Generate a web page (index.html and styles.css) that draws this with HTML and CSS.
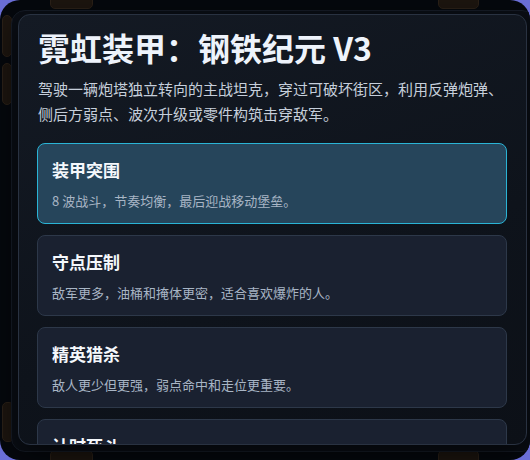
FILE: index.html
```
<!DOCTYPE html>
<html lang="zh-CN">
<head>
<meta charset="utf-8">
<title>霓虹装甲：钢铁纪元 V3</title>
<link rel="stylesheet" href="styles.css">
</head>
<body>
<div class="stage">
  <div class="deco deco-top-a"></div>
  <div class="deco deco-top-b"></div>
  <div class="deco deco-bot-a"></div>
  <div class="deco deco-bot-b"></div>
  <div class="deco deco-left-a"></div>
  <div class="deco deco-left-b"></div>
  <div class="deco deco-left-c"></div>
  <div class="backplate"></div>
  <section class="modal">
    <h1 class="title">霓虹装甲：钢铁纪元 V3</h1>
    <p class="intro">驾驶一辆炮塔独立转向的主战坦克，穿过可破坏街区，利用反弹炮弹、侧后方弱点、波次升级或零件构筑击穿敌军。</p>
    <div class="modes">
      <div class="mode is-active">
        <div class="mode-name">装甲突围</div>
        <div class="mode-desc">8 波战斗，节奏均衡，最后迎战移动堡垒。</div>
      </div>
      <div class="mode">
        <div class="mode-name">守点压制</div>
        <div class="mode-desc">敌军更多，油桶和掩体更密，适合喜欢爆炸的人。</div>
      </div>
      <div class="mode">
        <div class="mode-name">精英猎杀</div>
        <div class="mode-desc">敌人更少但更强，弱点命中和走位更重要。</div>
      </div>
      <div class="mode">
        <div class="mode-name">计时死斗</div>
        <div class="mode-desc">限时内击毁尽可能多的敌人，连击越高得分越多。</div>
      </div>
    </div>
  </section>
</div>
</body>
</html>
```
FILE: styles.css
```
* { box-sizing: border-box; }
html, body { margin: 0; padding: 0; }
body {
  background: #6a6ed6;
  width: 530px;
  height: 460px;
  overflow: hidden;
  font-family: "Noto Sans CJK SC", "Noto Sans", sans-serif;
}
.stage {
  position: relative;
  width: 530px;
  height: 460px;
  border-radius: 20px;
  background: #05080d;
  overflow: hidden;
}
.deco {
  position: absolute;
  background: #1c150f;
  border: 1px solid #2a2017;
  border-radius: 5px;
}
.deco-top-a { left: 50px; top: -10px; width: 43px; height: 19px; }
.deco-top-b { left: 438px; top: -10px; width: 41px; height: 19px; }
.deco-bot-a { left: 50px; top: 450px; width: 43px; height: 20px; }
.deco-bot-b { left: 438px; top: 450px; width: 41px; height: 20px; }
.deco-left-a { left: 2px; top: 15px; width: 10px; height: 42px; }
.deco-left-b { left: 2px; top: 63px; width: 10px; height: 42px; }
.deco-left-c { left: 2px; top: 402px; width: 12px; height: 40px; }
.backplate {
  position: absolute;
  left: 11px;
  top: 10px;
  width: 525px;
  height: 442px;
  border-radius: 14px;
  background: #0a0e15;
  border: 1px solid #161c27;
}
.modal {
  position: absolute;
  left: 18px;
  top: 14px;
  width: 509px;
  height: 431px;
  overflow: hidden;
  border: 1px solid #293241;
  border-radius: 12px;
  background: linear-gradient(160deg, #141a24 0%, #0e131b 60%, #0c1017 100%);
  padding: 13px 19px 0 18px;
  box-shadow: 0 10px 30px rgba(0, 0, 0, 0.6);
}
.title {
  margin: 0;
  font-size: 32px;
  line-height: 38px;
  font-weight: 700;
  color: #eef3fb;
  padding-left: 1px;
}
.intro {
  margin: 10px 0 0;
  font-size: 15px;
  line-height: 25px;
  color: #c6cfdb;
  padding-left: 1px;
}
.modes {
  margin-top: 17px;
  display: flex;
  flex-direction: column;
  gap: 11px;
}
.mode {
  flex: none;
  height: 81px;
  border: 1px solid #2d3849;
  border-radius: 8px;
  background: #1a2130;
  padding: 14px 14px 0 14px;
}
.mode.is-active {
  background: #26455b;
  border-color: #2ab4d6;
}
.mode-name {
  font-size: 17px;
  line-height: 24px;
  font-weight: 700;
  color: #f5f8fc;
}
.mode-desc {
  margin-top: 9px;
  font-size: 13px;
  line-height: 20px;
  color: #a8b5c5;
}
```
